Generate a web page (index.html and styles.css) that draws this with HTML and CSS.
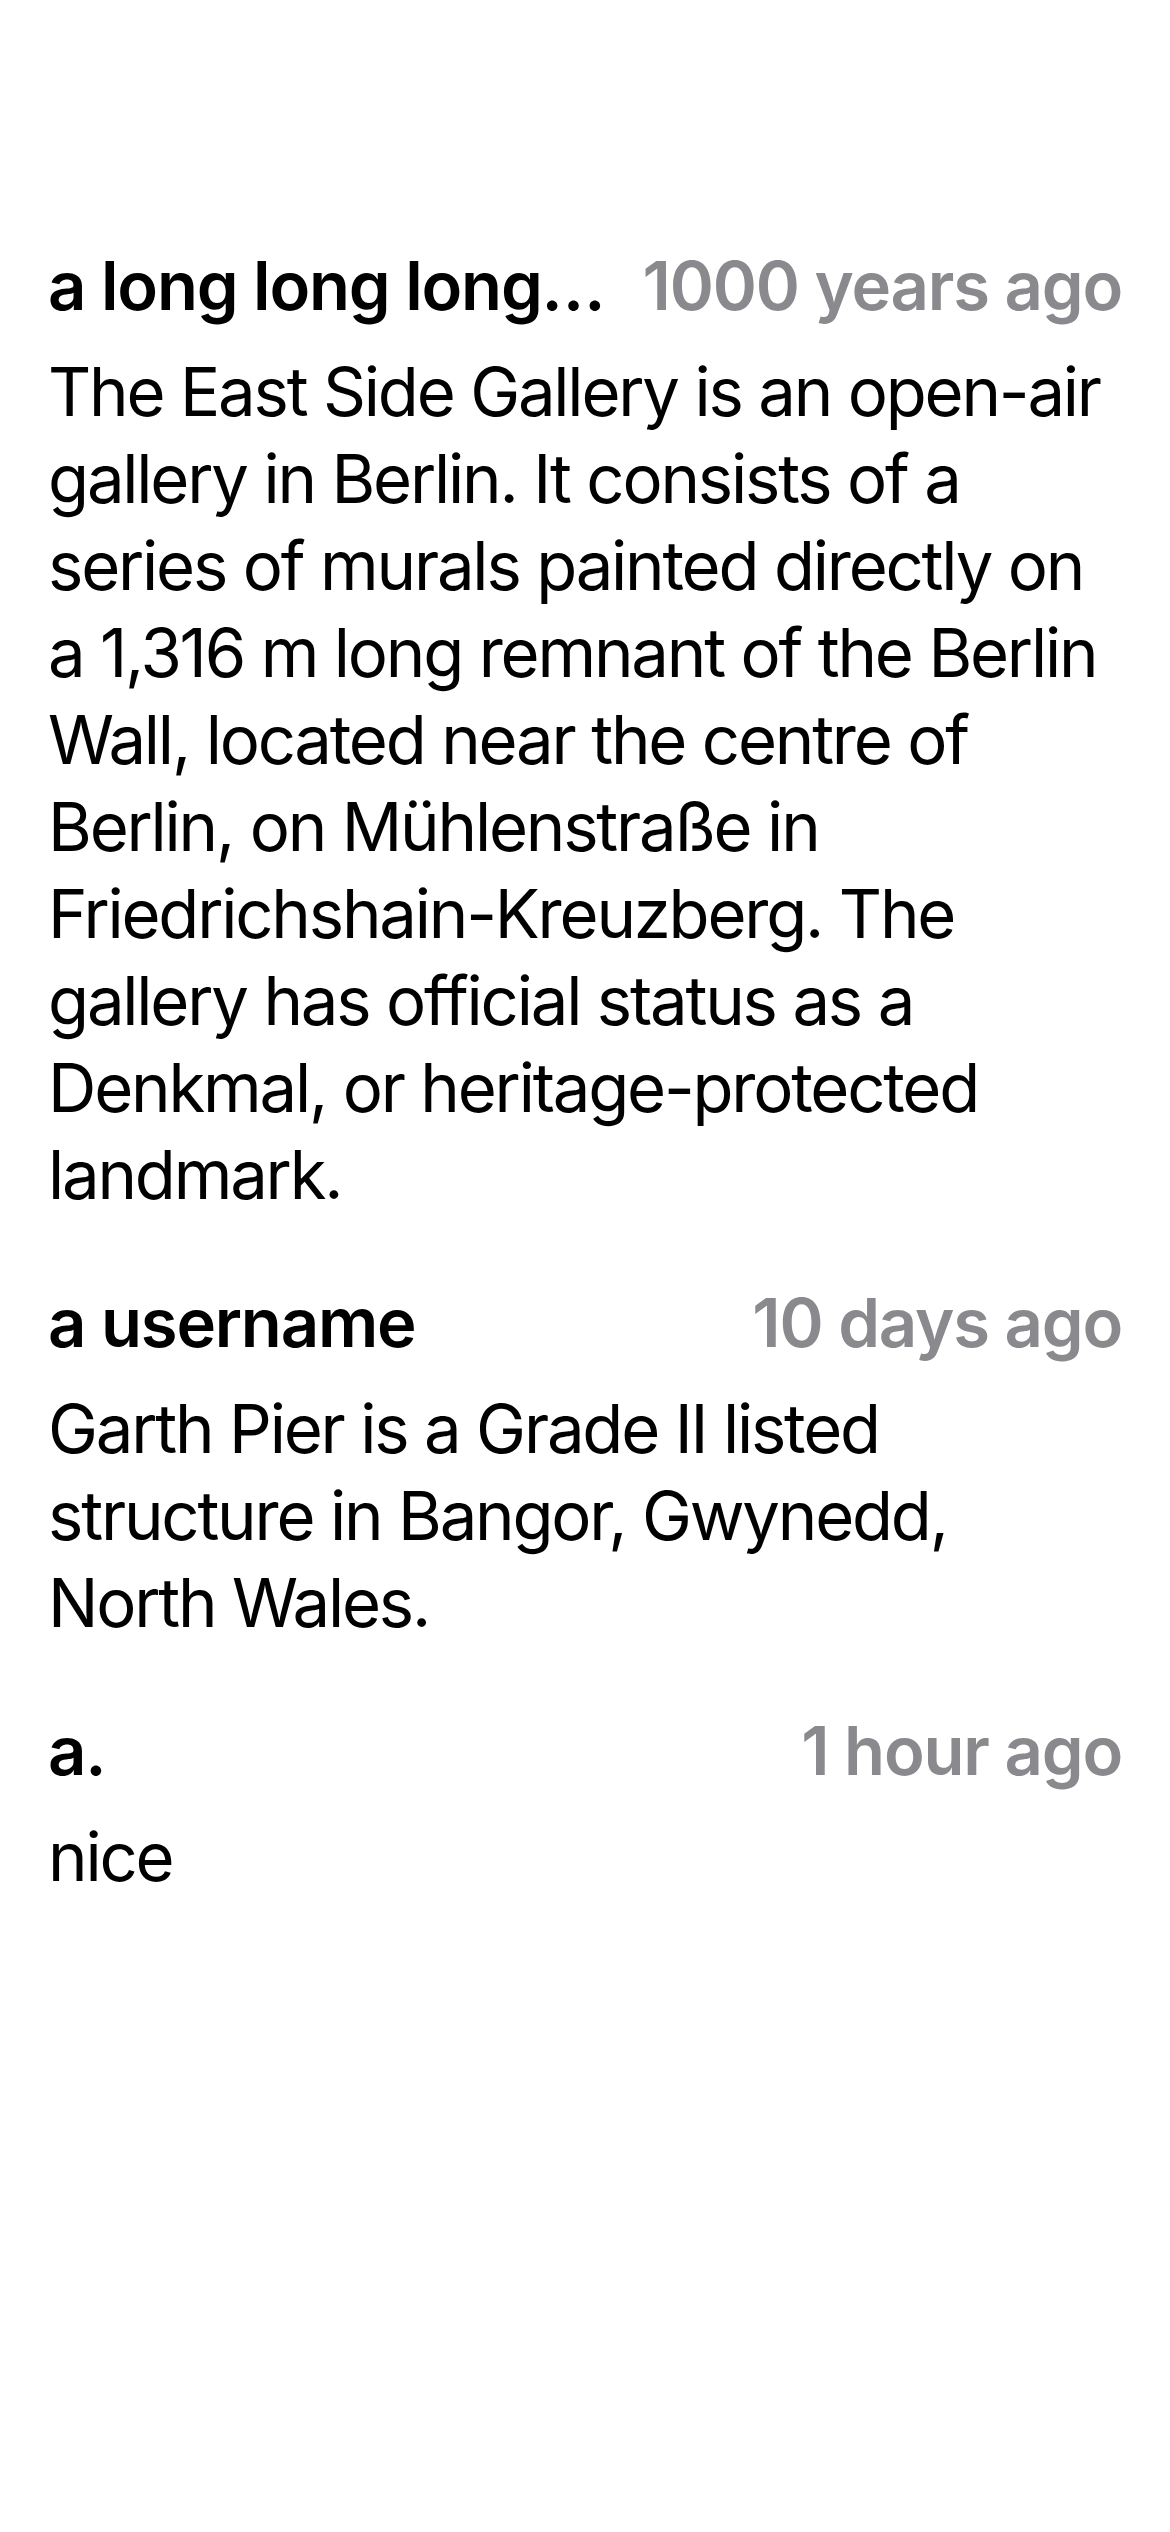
FILE: index.html
```html
<!DOCTYPE html>
<html lang="en">
<head>
<meta charset="utf-8">
<title>Comments</title>
<link rel="stylesheet" href="styles.css">
</head>
<body>
<main class="list">
  <article class="cell">
    <header class="cell-head">
      <span class="name">a long long long…</span>
      <span class="time">1000 years ago</span>
    </header>
    <p class="body">The East Side Gallery is an open-air gallery in Berlin. It consists of a series of murals painted directly on a 1,316 m long remnant of the Berlin Wall, located near the centre of Berlin, on Mühlenstraße in Friedrichshain-Kreuzberg. The gallery has official status as a Denkmal, or heritage-protected landmark.</p>
  </article>
  <article class="cell">
    <header class="cell-head">
      <span class="name">a username</span>
      <span class="time">10 days ago</span>
    </header>
    <p class="body">Garth Pier is a Grade II listed structure in Bangor, Gwynedd, North Wales.</p>
  </article>
  <article class="cell">
    <header class="cell-head">
      <span class="name">a.</span>
      <span class="time">1 hour ago</span>
    </header>
    <p class="body">nice</p>
  </article>
</main>
</body>
</html>
```
FILE: styles.css
```css
html, body {
  margin: 0;
  padding: 0;
  background: #ffffff;
}
body {
  font-family: Inter, "Noto Sans", "Liberation Sans", sans-serif;
  color: #000000;
}
.list {
  display: flex;
  flex-direction: column;
  gap: 61px;
  padding: 242px 48px 0 48px;
}
.cell {
  display: flex;
  flex-direction: column;
  gap: 19px;
}
.cell-head {
  display: flex;
  justify-content: space-between;
  align-items: baseline;
  gap: 16px;
  font-size: 67px;
  line-height: 87px;
  font-weight: 600;
  letter-spacing: -1.2px;
}
.name {
  flex: 0 1 auto;
  min-width: 0;
  white-space: nowrap;
  overflow: hidden;
  text-overflow: ellipsis;
  color: #000000;
}
.time {
  flex-shrink: 0;
  white-space: nowrap;
  color: #8a8a8e;
}
.body {
  margin: 0;
  font-size: 67px;
  line-height: 87px;
  font-weight: 400;
  letter-spacing: -2.2px;
}
```
